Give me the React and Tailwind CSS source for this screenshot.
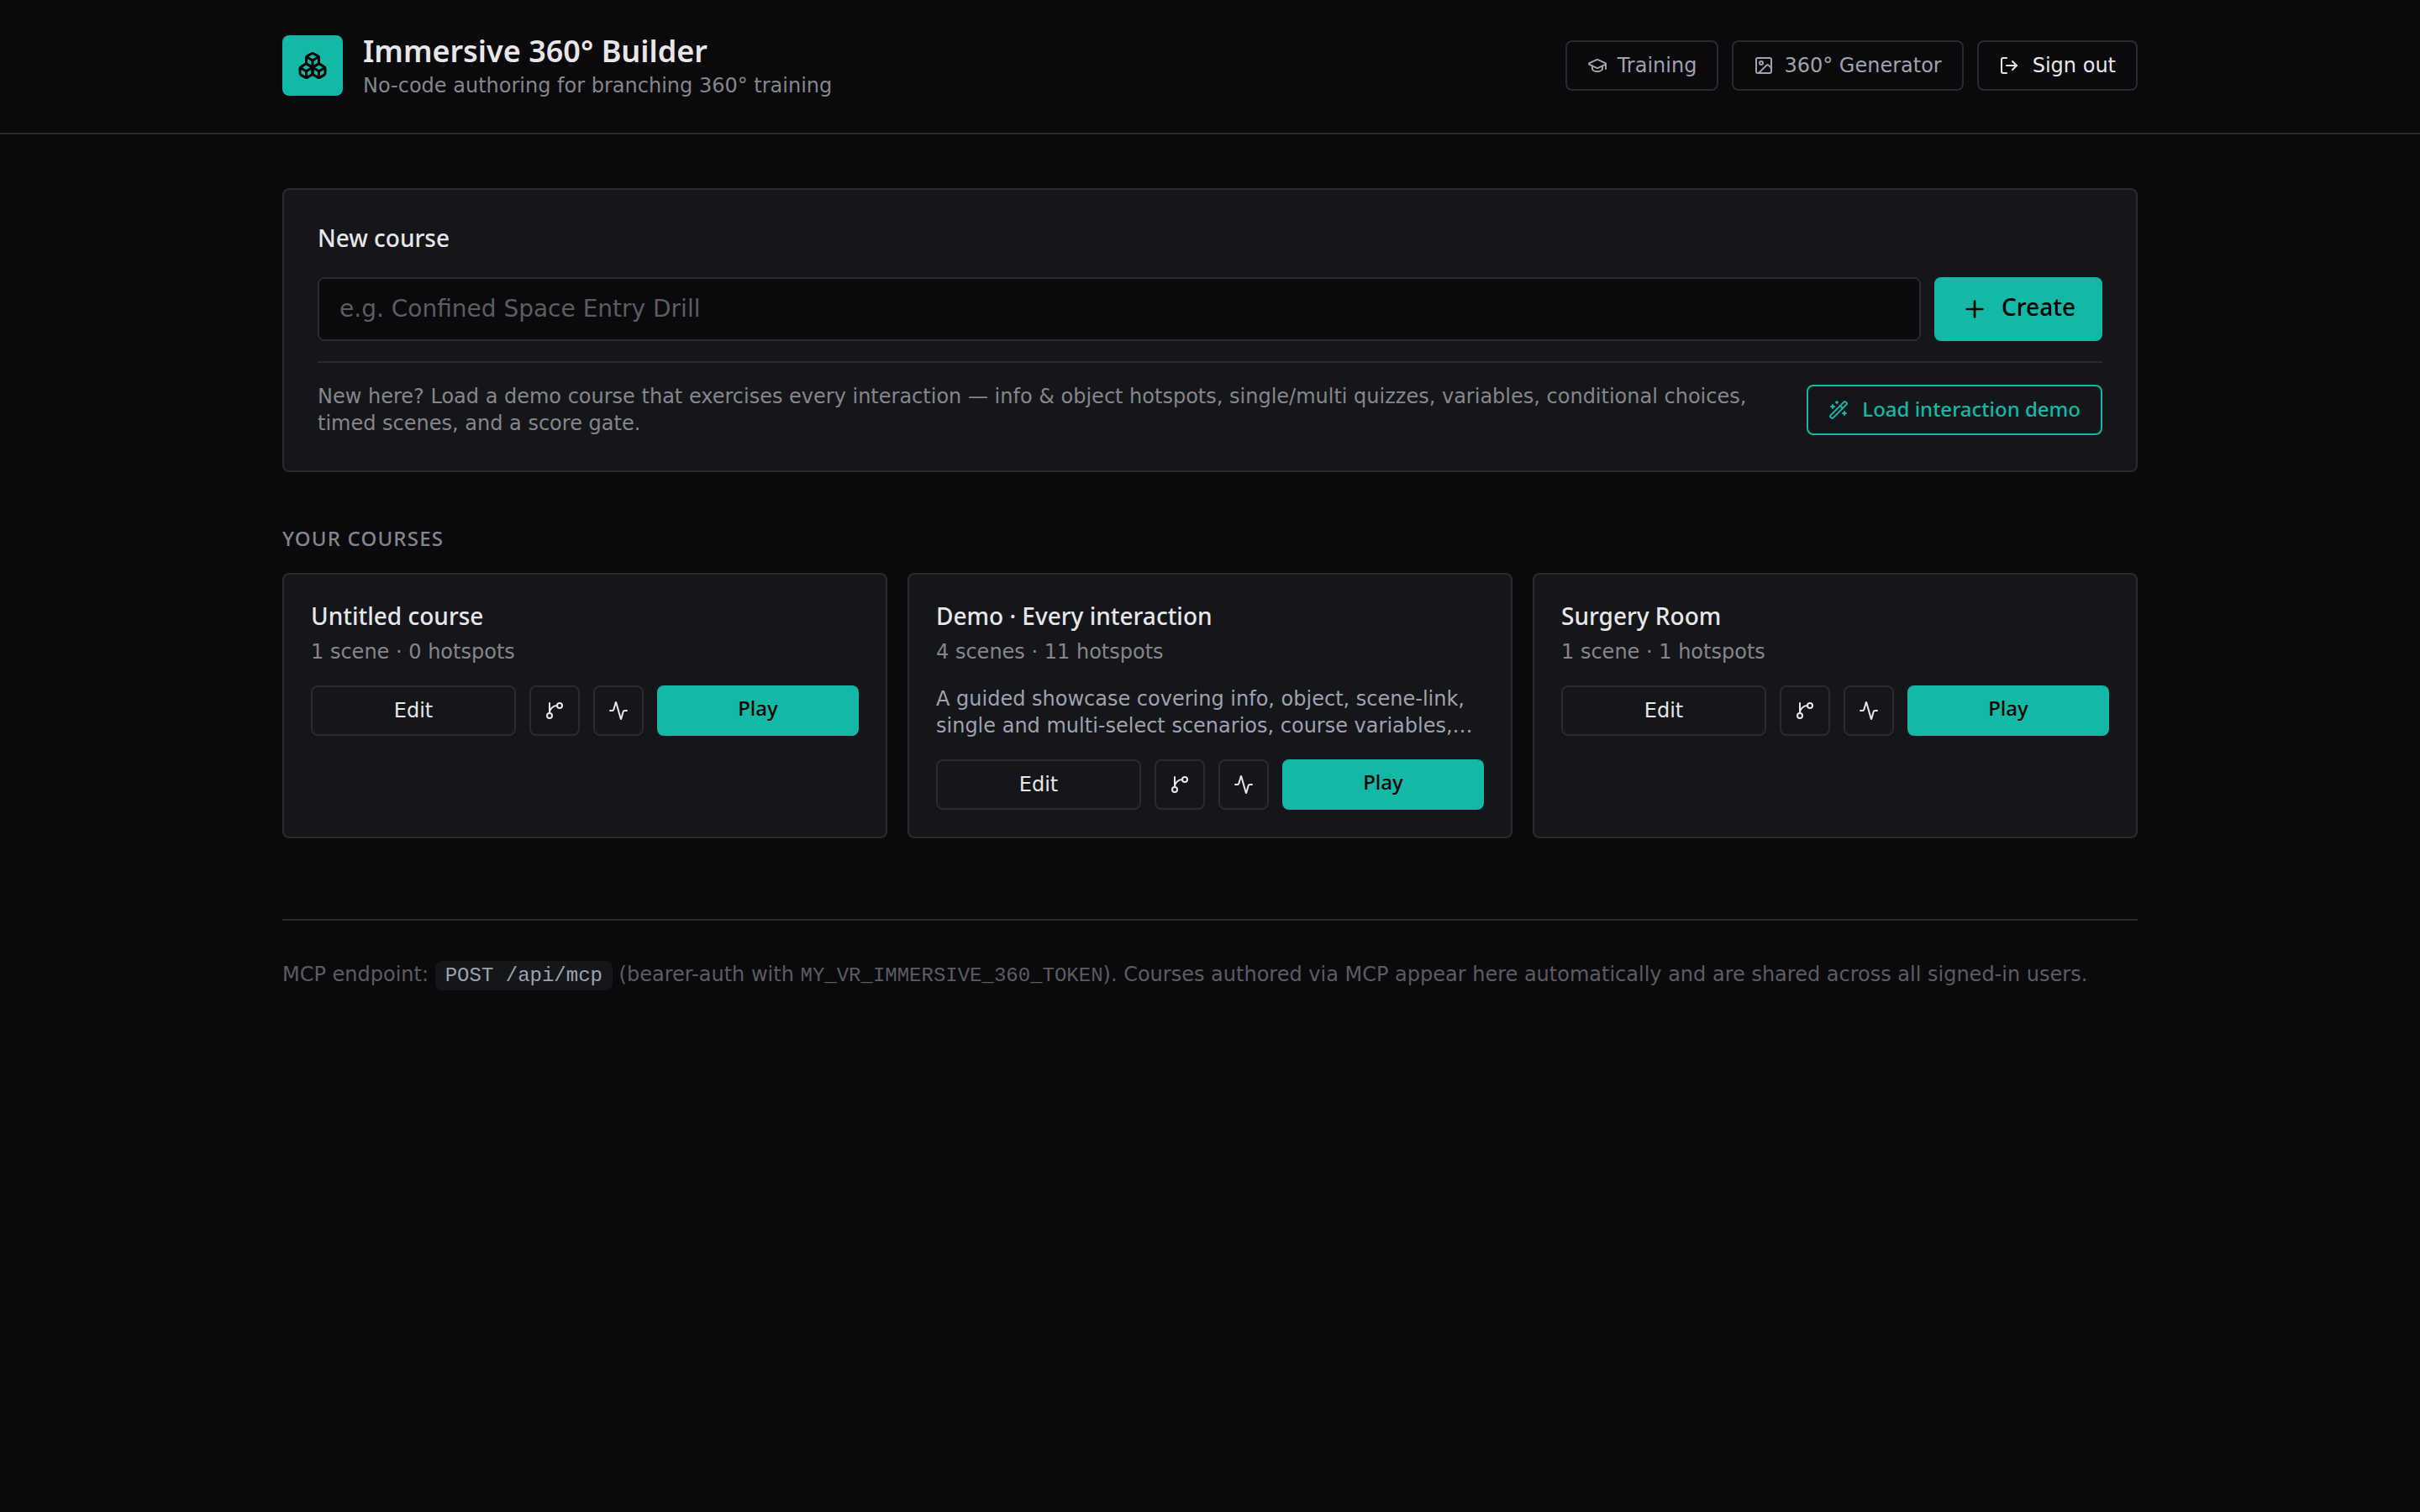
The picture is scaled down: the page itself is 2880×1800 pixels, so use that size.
import React, { useState } from 'react'
import { Activity, Boxes, GraduationCap, Image, LogOut, Plus, WandSparkles } from 'lucide-react'

const COURSES = [
  { id: 'untitled', title: 'Untitled course', scenes: 1, hotspots: 0 },
  {
    id: 'demo',
    title: 'Demo · Every interaction',
    scenes: 4,
    hotspots: 11,
    description:
      'A guided showcase covering info, object, scene-link, single and multi-select scenarios, course variables,…',
  },
  { id: 'surgery', title: 'Surgery Room', scenes: 1, hotspots: 1 },
]

function BranchIcon() {
  return (
    <svg width="24" height="24" viewBox="0 0 24 24" fill="none" stroke="currentColor" strokeWidth="2" strokeLinecap="round" strokeLinejoin="round" aria-hidden="true">
      <path d="M15 6a9 9 0 0 0-9 9V3" />
      <circle cx="18" cy="6" r="3" />
      <circle cx="6" cy="18" r="3" />
    </svg>
  )
}

function CourseCard({ course }) {
  return (
    <li className="rounded-lg border-2 border-[#2a2a2f] bg-[#15161a] p-8">
      <h3 className="font-['Noto_Sans',sans-serif] text-[28px] leading-[34px] font-medium">{course.title}</h3>
      <p className="mt-2.5 text-[24px] leading-8 text-[#85868d]">
        {course.scenes} scene{course.scenes === 1 ? '' : 's'} · {course.hotspots} hotspots
      </p>
      {course.description && (
        <p className="mt-6 text-[24px] leading-8 text-[#9ca3af]">{course.description}</p>
      )}
      <div className="mt-6 flex gap-4">
        <a href="#edit" className="flex-1 rounded-lg border-2 border-[#2a2a2f] px-6 py-3 text-center text-[24px] leading-8">
          Edit
        </a>
        <a href="#graph" aria-label="Scene graph" className="flex items-center rounded-lg border-2 border-[#2a2a2f] px-4">
          <BranchIcon />
        </a>
        <a href="#analytics" aria-label="Analytics" className="flex items-center rounded-lg border-2 border-[#2a2a2f] px-4">
          <Activity size={24} />
        </a>
        <a href="#play" className="flex-1 rounded-lg bg-[#14b8a6] px-6 py-3 text-center font-['Noto_Sans',sans-serif] text-[24px] leading-[30px] font-medium text-black">
          Play
        </a>
      </div>
    </li>
  )
}

export default function App() {
  const [title, setTitle] = useState('')

  return (
    <div className="min-h-screen bg-[#0a0a0c] font-['DejaVu_Sans',sans-serif] text-[#e7e7ea]">
      {/* Header */}
      <header className="border-b-2 border-[#2a2a2f]">
        <div className="mx-auto flex max-w-[2304px] items-center justify-between px-12 pt-[38px] pb-10">
          <div className="flex items-center gap-6">
            <div className="flex size-18 items-center justify-center rounded-lg bg-[#14b8a6] text-black">
              <Boxes size={36} />
            </div>
            <div>
              <h1 className="font-['Noto_Sans',sans-serif] text-[36px] leading-[46px] font-semibold">Immersive 360° Builder</h1>
              <p className="mt-0.5 text-[24px] leading-8 text-[#85868d]">No-code authoring for branching 360° training</p>
            </div>
          </div>
          <nav className="flex gap-4 text-[24px] leading-8">
            <a href="#training" className="flex items-center gap-3 rounded-lg border-2 border-[#2a2a2f] px-6 py-3 text-[#9ca3af]">
              <GraduationCap size={24} />
              Training
            </a>
            <a href="#generator" className="flex items-center gap-3 rounded-lg border-2 border-[#2a2a2f] px-6 py-3 text-[#9ca3af]">
              <Image size={24} />
              360° Generator
            </a>
            <button type="button" className="flex items-center gap-4 rounded-lg border-2 border-[#2a2a2f] px-6 py-3">
              <LogOut size={24} />
              Sign out
            </button>
          </nav>
        </div>
      </header>

      <main className="mx-auto max-w-[2304px] px-12 py-16">
        {/* New course */}
        <section className="rounded-lg border-2 border-[#2a2a2f] bg-[#15161a] p-10">
          <h2 className="mb-[30px] font-['Noto_Sans',sans-serif] text-[28px] leading-[34px] font-medium">
            <label htmlFor="course-title">New course</label>
          </h2>
          <form className="flex gap-4" onSubmit={e => e.preventDefault()}>
            <input
              id="course-title"
              value={title}
              onChange={e => setTitle(e.target.value)}
              placeholder="e.g. Confined Space Entry Drill"
              className="min-w-0 flex-1 rounded-lg border-2 border-[#2a2a2f] bg-[#0a0a0c] px-6 py-4 text-[28px] leading-10 outline-none placeholder:text-[#5b5c64]"
            />
            <button
              type="submit"
              className="flex items-center gap-4 rounded-lg bg-[#14b8a6] px-8 font-['Noto_Sans',sans-serif] text-[28px] font-medium text-black"
            >
              <Plus size={32} />
              <span className="pb-1.5 leading-[34px]">Create</span>
            </button>
          </form>
          <div className="mt-6 flex items-center justify-between gap-6 border-t-2 border-[#2a2a2f] pt-6">
            <p className="text-[24px] leading-8 text-[#85868d]">
              New here? Load a demo course that exercises every interaction — info &amp; object hotspots, single/multi
              quizzes, variables, conditional choices, timed scenes, and a score gate.
            </p>
            <button
              type="button"
              className="flex shrink-0 items-center gap-4 rounded-lg border-2 border-[#14b8a6] px-6 py-3 font-['Noto_Sans',sans-serif] text-[24px] font-medium text-[#14b8a6]"
            >
              <WandSparkles size={24} />
              <span className="pb-0.5 leading-[30px]">Load interaction demo</span>
            </button>
          </div>
        </section>

        {/* Courses */}
        <section className="mt-16">
          <h2 className="mb-[26px] font-['Noto_Sans',sans-serif] text-[24px] leading-[30px] font-medium tracking-wider text-[#85868d] uppercase">
            Your courses
          </h2>
          <ul className="grid grid-cols-3 gap-6">
            {COURSES.map(c => (
              <CourseCard key={c.id} course={c} />
            ))}
          </ul>
        </section>

        <footer className="mt-24 border-t-2 border-[#2a2a2f] pt-12 text-[24px] leading-8 text-[#5b5c64]">
          MCP endpoint:{' '}
          <code className="rounded-lg bg-[#15161a] px-3 py-1 font-['Liberation_Mono',monospace] text-[#9ca3af]">POST /api/mcp</code>{' '}
          (bearer-auth with <code className="font-['Liberation_Mono',monospace]">MY_VR_IMMERSIVE_360_TOKEN</code>). Courses
          authored via MCP appear here automatically and are shared across all signed-in users.
        </footer>
      </main>
    </div>
  )
}
